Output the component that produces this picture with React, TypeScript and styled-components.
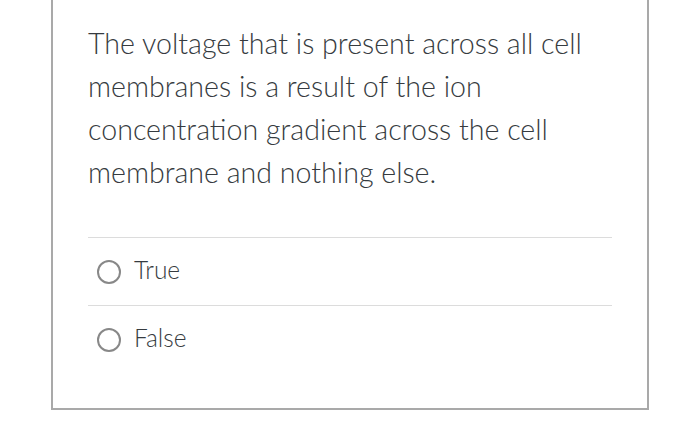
import React from "react";
import styled, { createGlobalStyle } from "styled-components";

const Global = createGlobalStyle`
  html, body { margin: 0; padding: 0; background: #ffffff; }
  body { font-family: Lato, "Open Sans", sans-serif; }
`;

const Page = styled.div`
  width: 700px;
  height: 429px;
  padding-left: 51px;
  box-sizing: border-box;
`;

const Card = styled.div`
  width: 598px;
  box-sizing: border-box;
  border: 2px solid #a9a9a9;
  border-top: 0;
  padding: 22px 35px 35px 35px;
  background: #fff;
`;

const Question = styled.p`
  margin: 0 0 43px 0;
  font-size: 28.6px;
  line-height: 43px;
  font-weight: 300;
  color: #363b40;
`;

const Options = styled.div`
  display: flex;
  flex-direction: column;
`;

const Option = styled.label`
  display: flex;
  align-items: center;
  height: 68px;
  box-sizing: border-box;
  border-top: 1px solid #dcdcdc;
  padding-left: 9px;
  gap: 13px;
  font-size: 24.5px;
  font-weight: 300;
  color: #363b40;
`;

const Radio = styled.span`
  width: 24px;
  height: 24px;
  box-sizing: border-box;
  border: 2px solid #888;
  border-radius: 50%;
  flex: none;
`;

const OptionText = styled.span`
  padding-bottom: 5px;
`;

export default function App() {
  return (
    <Page>
      <Global />
      <Card>
        <Question>
          The voltage that is present across all cell membranes is a result of the ion
          concentration gradient across the cell membrane and nothing else.
        </Question>
        <Options>
          <Option>
            <Radio />
            <OptionText>True</OptionText>
          </Option>
          <Option>
            <Radio />
            <OptionText>False</OptionText>
          </Option>
        </Options>
      </Card>
    </Page>
  );
}
